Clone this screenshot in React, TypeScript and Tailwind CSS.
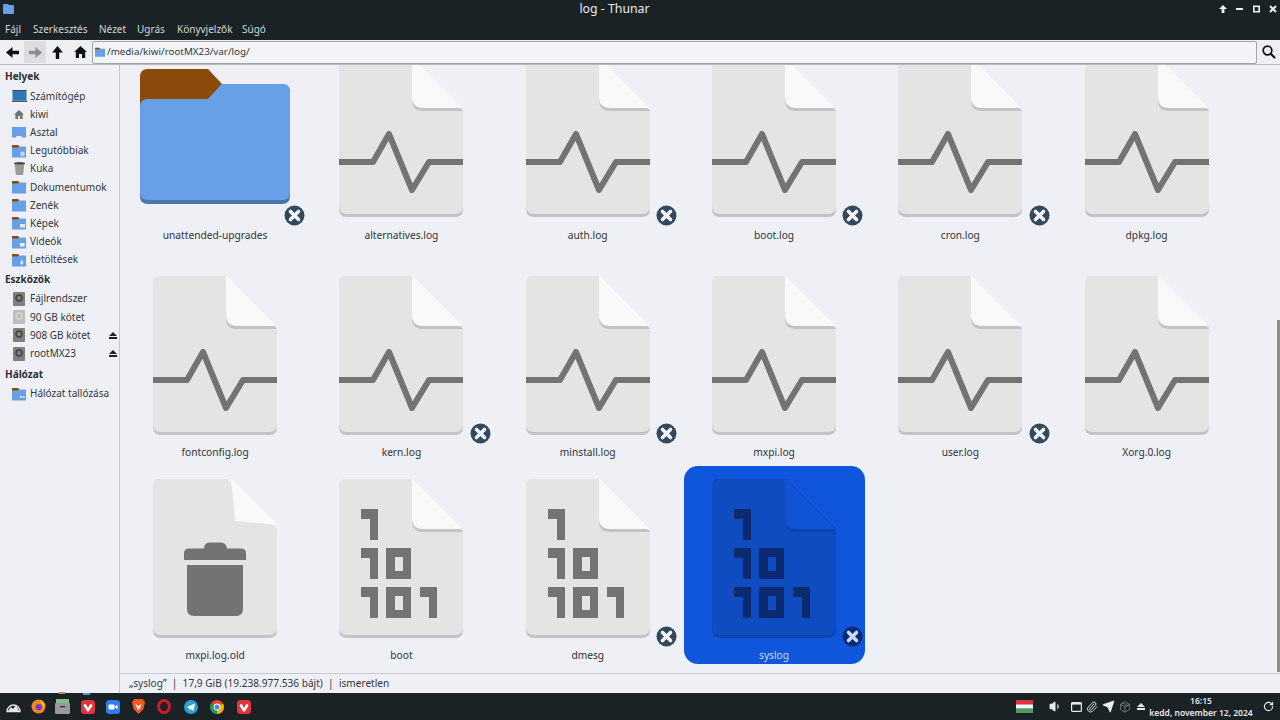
import React from "react";
import { Volume1, Paperclip, Send, Package, RotateCw } from "lucide-react";

const FONT = "font-['Noto_Sans',sans-serif]";

type Kind = "folder" | "log" | "bin" | "old";

function PaperBody({ selected }: { selected?: boolean }) {
  const body = selected ? "#0f4cc0" : "#e4e4e4";
  const edge = selected ? "#0d45ae" : "#c3c3c7";
  return (
    <>
      <path d="M8 3H73L124 54V151q0 8-8 8H8q-8 0-8-8V11q0-8 8-8Z" fill={edge} />
      <path d="M8 -1H73L124 50V148q0 8-8 8H8q-8 0-8-8V7q0-8 8-8Z" fill={body} />
    </>
  );
}

function FileIcon({ kind, selected }: { kind: Kind; selected?: boolean }) {
  const ink = selected ? "#0b2a6f" : "#737373";
  if (kind === "folder") {
    return (
      <svg width="150" height="135" viewBox="0 0 150 135" className="mb-[3px]">
        <path d="M8 0H68L82 15 68 31H10L0 44V8q0-8 8-8Z" fill="#8b4a0a" />
        <path d="M8 30H68L82 15H142q8 0 8 8V127q0 8-8 8H8q-8 0-8-8V38q0-8 8-8Z" fill="#4a76ab" />
        <path d="M8 30H68L82 15H142q8 0 8 8V123q0 8-8 8H8q-8 0-8-8V38q0-8 8-8Z" fill="#68a0e7" />
      </svg>
    );
  }
  const foldFill = selected ? "#1053d4" : "#f9f9f9";
  return (
    <svg width="124" height="159" viewBox="0 0 124 159" className="overflow-hidden">
      <PaperBody selected={selected} />
      {kind === "old" ? (
        <>
          <path d="M78 -1L125 46 82 42Z" fill="#f9f9f9" />
          <path d="M51 69.5q0-6 6-6h11q5 0 6 6H88q5 0 5 5V81H31V74.5q0-5 5-5Z" fill={ink} />
          <path d="M34 86H90V130q0 7-7 7H41q-7 0-7-7Z" fill={ink} />
        </>
      ) : (
        <>
          <path d="M73 1V42q0 11 11 11H124Z" fill={selected ? "#0d45ae" : "#c3c3c7"} />
          <path d="M73 -1V39q0 11 11 11H124Z" fill={foldFill} />
          {selected && <path d="M73 -1L124 50" stroke="#0d48b8" strokeWidth="1" />}
        </>
      )}
      {kind === "log" && (
        <path
          d="M0 104H34L50 76 73 132 90 104H124"
          fill="none"
          stroke={ink}
          strokeWidth="6"
          strokeLinejoin="round"
        />
      )}
      {kind === "bin" && (
        <path
          fillRule="evenodd"
          d="M22 30H39V61H31V40H22ZM22 69H39V100H31V79H22ZM47 69H72V100H47ZM56 78V92H64V78ZM22 108H39V139H31V118H22ZM47 108H72V139H47ZM56 117V131H64V117ZM81 108H98V139H90V118H81Z"
          fill={ink}
        />
      )}
    </svg>
  );
}

function Badge({ selected }: { selected?: boolean }) {
  return (
    <svg
      width="21"
      height="21"
      viewBox="0 0 21 21"
      className="absolute left-[161.5px] top-[159.5px]"
    >
      <circle cx="10.5" cy="10.5" r="10" fill={selected ? "#0b2a6f" : "#33495c"} />
      <path
        d="M6.5 6.5L14.5 14.5M14.5 6.5L6.5 14.5"
        stroke={selected ? "#c8d8f5" : "#f3f4f6"}
        strokeWidth="3.6"
        strokeLinecap="round"
      />
    </svg>
  );
}

type Item = { name: string; kind: Kind; badge?: boolean; selected?: boolean };

function Cell({ item, labelGap }: { item: Item; labelGap: string }) {
  return (
    <div className="relative flex h-[198px] flex-col items-center">
      <div
        className={`flex w-[181px] h-[198px] flex-col items-center rounded-[14px] pt-[13px] ${
          item.selected ? "bg-[#0f56dc]" : ""
        }`}
      >
        <div className="flex h-[159px] items-center justify-center">
          <FileIcon kind={item.kind} selected={item.selected} />
        </div>
        <div
          className={`${labelGap} text-[10.2px] leading-[16px] ${
            item.selected ? "text-[#c9d8f5]" : "text-[#2f3337]"
          }`}
        >
          {item.name}
        </div>
      </div>
      {item.badge && <Badge selected={item.selected} />}
    </div>
  );
}

const row1: Item[] = [
  { name: "unattended-upgrades", kind: "folder", badge: true },
  { name: "alternatives.log", kind: "log" },
  { name: "auth.log", kind: "log", badge: true },
  { name: "boot.log", kind: "log", badge: true },
  { name: "cron.log", kind: "log", badge: true },
  { name: "dpkg.log", kind: "log" },
];
const row2: Item[] = [
  { name: "fontconfig.log", kind: "log" },
  { name: "kern.log", kind: "log", badge: true },
  { name: "minstall.log", kind: "log", badge: true },
  { name: "mxpi.log", kind: "log" },
  { name: "user.log", kind: "log", badge: true },
  { name: "Xorg.0.log", kind: "log" },
];
const row3: Item[] = [
  { name: "mxpi.log.old", kind: "old" },
  { name: "boot", kind: "bin" },
  { name: "dmesg", kind: "bin", badge: true },
  { name: "syslog", kind: "bin", badge: true, selected: true },
];

function Row({
  items,
  className,
  labelGap,
}: {
  items: Item[];
  className?: string;
  labelGap: string;
}) {
  return (
    <div className={`grid shrink-0 grid-cols-[repeat(6,186.3px)] ${className ?? ""}`}>
      {items.map((i) => (
        <Cell key={i.name} item={i} labelGap={labelGap} />
      ))}
    </div>
  );
}

function SmallFolder({
  glyph,
  size = 14,
}: {
  glyph?: "pic" | "vid" | "down" | "net" | "clock";
  size?: number;
}) {
  return (
    <svg width={size} height={size} viewBox="0 0 14 14">
      <path d="M0 1.5q0-.5.5-.5H6L7.5 2.5 6 4H0Z" fill="#8b4a0a" />
      <path d="M0 3.5H6L7.5 2.5H13.5q.5 0 .5.5V13q0 .5-.5.5H.5Q0 13.5 0 13Z" fill="#68a0e7" />
      {glyph === "pic" && <rect x="8" y="8" width="5" height="3.5" fill="#e8eef8" />}
      {glyph === "vid" && <rect x="8" y="8" width="4.5" height="3.5" fill="#f3f6fb" />}
      {glyph === "down" && <path d="M9 7h1.5v2.5H12L9.8 12 7.6 9.5H9Z" fill="#e8eef8" />}
      {glyph === "net" && <path d="M8 9h2v2H8ZM11 9h1.5v2H11Z" fill="#e8eef8" />}
      {glyph === "clock" && <circle cx="10.5" cy="10" r="2.4" fill="#c6d6ea" />}
    </svg>
  );
}

function Drive({ light }: { light?: boolean }) {
  return (
    <svg width="12" height="14" viewBox="0 0 12 14">
      <rect width="12" height="14" rx="1" fill={light ? "#bdbdbd" : "#7f7f7f"} />
      <circle cx="6" cy="6" r="3" fill="none" stroke={light ? "#d4d4d4" : "#3f3f3f"} strokeWidth="1.4" />
    </svg>
  );
}

const Computer = () => (
  <svg width="15" height="13" viewBox="0 0 15 13">
    <rect x="0.5" y="0" width="14" height="10.5" rx="0.5" fill="#2f78b7" />
    <rect x="0.5" y="0" width="14" height="1" fill="#33506b" />
    <rect x="0" y="10.5" width="15" height="1.5" fill="#465a6b" />
  </svg>
);
const Home = () => (
  <svg width="10" height="9" viewBox="0 0 10 9">
    <path d="M5 0L10 4.5H8.6V9H5.9V6H4.1V9H1.4V4.5H0Z" fill="#6f7478" />
  </svg>
);
const Desk = () => (
  <svg width="14" height="11" viewBox="0 0 14 11">
    <path d="M0 0H14V10.5H10L9.5 9H4.5L4 10.5H0Z" fill="#68a0e7" />
  </svg>
);
const TrashSmall = () => (
  <svg width="11" height="13" viewBox="0 0 11 13">
    <ellipse cx="5.5" cy="1.5" rx="5.5" ry="1.5" fill="#44484b" />
    <path d="M.8 2.5H10.2L9.3 12q0 1-1.2 1H2.9q-1.2 0-1.2-1Z" fill="#9b9b9b" />
  </svg>
);

function SideHeader({ label, className }: { label: string; className?: string }) {
  return (
    <div className={`px-[5px] text-[10px] font-bold leading-[16px] text-[#2b2e31] ${className ?? ""}`}>
      {label}
    </div>
  );
}

function SideItem({
  icon,
  label,
  eject,
}: {
  icon: React.ReactNode;
  label: string;
  eject?: boolean;
}) {
  return (
    <div className="flex h-[18.2px] items-center text-[10px] text-[#33373a]">
      <div className="flex w-[30px] shrink-0 items-center justify-center pl-[8px]">{icon}</div>
      <div className="flex-1">{label}</div>
      {eject && (
        <svg width="8" height="7" viewBox="0 0 8 7" className="mr-[2px]">
          <path d="M4 0L8 4H0ZM0 5H8V7H0Z" fill="#222" />
        </svg>
      )}
    </div>
  );
}

function Sidebar() {
  return (
    <aside className="flex w-[120px] shrink-0 flex-col border-r border-[#c7c8cd] bg-[#eff0f5] pt-[3px]">
      <SideHeader label="Helyek" />
      <div className="mt-[3px] flex flex-col">
        <SideItem icon={<Computer />} label="Számítógép" />
        <SideItem icon={<Home />} label="kiwi" />
        <SideItem icon={<Desk />} label="Asztal" />
        <SideItem icon={<SmallFolder glyph="clock" />} label="Legutóbbiak" />
        <SideItem icon={<TrashSmall />} label="Kuka" />
        <SideItem icon={<SmallFolder />} label="Dokumentumok" />
        <SideItem icon={<SmallFolder />} label="Zenék" />
        <SideItem icon={<SmallFolder glyph="pic" />} label="Képek" />
        <SideItem icon={<SmallFolder glyph="vid" />} label="Videók" />
        <SideItem icon={<SmallFolder glyph="down" />} label="Letöltések" />
      </div>
      <SideHeader label="Eszközök" className="mt-[2px]" />
      <div className="mt-[3px] flex flex-col">
        <SideItem icon={<Drive />} label="Fájlrendszer" />
        <SideItem icon={<Drive light />} label="90 GB kötet" />
        <SideItem icon={<Drive />} label="908 GB kötet" eject />
        <SideItem icon={<Drive />} label="rootMX23" eject />
      </div>
      <SideHeader label="Hálózat" className="mt-[3px]" />
      <div className="mt-[3px]">
        <SideItem icon={<SmallFolder glyph="net" />} label="Hálózat tallózása" />
      </div>
    </aside>
  );
}

function Arrow({ dir, color }: { dir: "l" | "r" | "u"; color: string }) {
  const rot = dir === "l" ? "" : dir === "r" ? "rotate-180" : "rotate-90";
  return (
    <svg width="13" height="13" viewBox="0 0 13 13" className={rot}>
      <path d="M6.5 1V4.8H13V8.2H6.5V12L0 6.5Z" fill={color} />
    </svg>
  );
}

function Toolbar() {
  return (
    <div className="flex h-[25px] shrink-0 items-center bg-[#eeeff3] pl-[1px] border-b border-[#b9babd]">
      <div className="flex h-[22px] w-[23px] items-center justify-center">
        <Arrow dir="l" color="#0e0e0e" />
      </div>
      <div className="flex h-[22px] w-[22px] items-center justify-center bg-[#dcdde1]">
        <Arrow dir="r" color="#8d8e90" />
      </div>
      <div className="flex h-[22px] w-[23px] items-center justify-center">
        <Arrow dir="u" color="#0e0e0e" />
      </div>
      <div className="flex h-[22px] w-[23px] items-center justify-center">
        <svg width="13" height="12" viewBox="0 0 13 12">
          <path d="M6.5 0L13 6H11.2V12H8V8H5V12H1.8V6H0Z" fill="#111" />
        </svg>
      </div>
      <div className="flex h-[23px] w-[1165px] items-center rounded-[2px] border border-[#a4a5a8] bg-[#f3f4f8] pl-[2px] text-[9.8px] text-[#33373a]">
        <SmallFolder size={10} />
        <span className="ml-[2px]">/media/kiwi/rootMX23/var/log/</span>
      </div>
      <div className="flex flex-1 items-center justify-center">
        <svg width="14" height="14" viewBox="0 0 14 14">
          <circle cx="5.5" cy="5.5" r="4.3" fill="none" stroke="#111" strokeWidth="1.7" />
          <path d="M8.7 8.7L13 13" stroke="#111" strokeWidth="2.2" />
        </svg>
      </div>
    </div>
  );
}

function TitleBar() {
  return (
    <div className="flex h-[18px] shrink-0 items-center justify-between pl-[3px] pr-[3px] text-white">
      <svg width="11" height="10" viewBox="0 0 11 10">
        <path d="M0 1q0-1 1-1H5L6 1H10q1 0 1 1V9q0 1-1 1H1Q0 10 0 9Z" fill="#68a0e7" />
      </svg>
      <span className="mr-[4px] text-[12.3px] text-[#e8eaec]">log - Thunar</span>
      <div className="flex items-center gap-[9px]">
        <svg width="8" height="8" viewBox="0 0 8 8"><path d="M4 0L8 4H5.4V8H2.6V4H0Z" fill="#eee" /></svg>
        <svg width="8" height="8" viewBox="0 0 8 8"><rect y="3" width="7" height="2" fill="#eee" /></svg>
        <svg width="7" height="8" viewBox="0 0 7 7"><rect x="0.8" y="0.8" width="5.4" height="5.4" fill="none" stroke="#eee" strokeWidth="1.6" /></svg>
        <svg width="8" height="8" viewBox="0 0 8 8"><path d="M1 1L7 7M7 1L1 7" stroke="#eee" strokeWidth="2" /></svg>
      </div>
    </div>
  );
}

function MenuBar() {
  const items = [
    ["Fájl", "w-[28px]"],
    ["Szerkesztés", "w-[66px]"],
    ["Nézet", "w-[38px]"],
    ["Ugrás", "w-[40px]"],
    ["Könyvjelzők", "w-[65px]"],
    ["Súgó", "w-[30px]"],
  ];
  return (
    <div className="flex h-[22px] shrink-0 items-center pl-[5px] text-[10px] text-[#d3d6d8]">
      {items.map(([t, w]) => (
        <span key={t} className={w}>
          {t}
        </span>
      ))}
    </div>
  );
}

const Vivaldi = () => (
  <svg width="14" height="14" viewBox="0 0 14 14">
    <rect width="14" height="14" rx="3.5" fill="#e2343a" />
    <path d="M3 4.5q1.5-1 2.3.5L7 8l1.7-3q.8-1.5 2.3-.5.7.8 0 2L8 11q-1 1.3-2 0L3 6.5q-.7-1.2 0-2Z" fill="#fff" />
  </svg>
);

function TaskIcons() {
  return (
    <div className="flex items-center">
      <div className="flex w-[26px] justify-center">
        <svg width="15" height="12" viewBox="0 0 15 12">
          <path d="M1 10.5A6.5 6.5 0 1 1 14 10.5H1Z" fill="none" stroke="#e5e5e5" strokeWidth="1.4" />
          <path d="M2 10L5 6l2 2 3-4 3 6Z" fill="#e5e5e5" />
        </svg>
      </div>
      <div className="flex w-[24px] justify-center">
        <svg width="15" height="15" viewBox="0 0 15 15">
          <circle cx="7.5" cy="7.5" r="7" fill="#f4851f" />
          <path d="M9 .8Q14.5 3.5 14 9L10 4Z" fill="#ffbd2e" />
          <circle cx="7.8" cy="8" r="3.1" fill="#6b3fc9" />
        </svg>
      </div>
      <div className="relative flex w-[25px] justify-center">
        <svg width="15" height="15" viewBox="0 0 15 15">
          <rect x="1" y="0" width="13" height="5" fill="#7fc08a" />
          <rect y="4" width="15" height="11" rx="1" fill="#9a9a9a" />
          <rect x="5" y="7" width="5" height="1.3" fill="#333" />
        </svg>
        <div className="absolute left-[9px] top-[-7px] h-[2px] w-[6px] bg-[#d08a4a]" />
      </div>
      <div className="relative flex w-[25px] justify-center">
        <Vivaldi />
        <div className="absolute left-[8px] top-[-7px] h-[2px] w-[7px] bg-[#4f9bd0]" />
      </div>
      <div className="flex w-[25px] justify-center">
        <svg width="14" height="14" viewBox="0 0 14 14">
          <rect width="14" height="14" rx="3.5" fill="#2d7ff0" />
          <rect x="2.5" y="4.5" width="6" height="5" rx="1" fill="#fff" />
          <path d="M9.2 6.3L11.5 4.8V9.2L9.2 7.7Z" fill="#fff" />
        </svg>
      </div>
      <div className="flex w-[26px] justify-center">
        <svg width="13" height="15" viewBox="0 0 13 15">
          <path d="M2.5 0H10.5L13 3 11.5 10 6.5 15 1.5 10 0 3Z" fill="#f15a22" />
          <path d="M3.5 5L6.5 7 9.5 5 8 9 6.5 11 5 9Z" fill="#fff" />
        </svg>
      </div>
      <div className="flex w-[26px] justify-center">
        <svg width="14" height="15" viewBox="0 0 14 15">
          <ellipse cx="7" cy="7.5" rx="5.4" ry="6" fill="none" stroke="#d3182d" strokeWidth="3" />
        </svg>
      </div>
      <div className="flex w-[27px] justify-center">
        <svg width="14" height="14" viewBox="0 0 14 14">
          <circle cx="7" cy="7" r="7" fill="#2a9fd9" />
          <path d="M2.5 7L11 3.5 9.5 11 6.5 9 5.5 10.5 5 8Z" fill="#fff" />
        </svg>
      </div>
      <div className="flex w-[26px] justify-center">
        <svg width="14" height="14" viewBox="0 0 14 14">
          <circle cx="7" cy="7" r="7" fill="#db4437" />
          <path d="M7 7L1 3.5A7 7 0 0 0 7 14Z" fill="#0f9d58" />
          <path d="M7 7L13 3.5A7 7 0 0 1 7 14Z" fill="#f4b400" />
          <circle cx="7" cy="7" r="3.4" fill="#fff" />
          <circle cx="7" cy="7" r="2.5" fill="#4285f4" />
        </svg>
      </div>
      <div className="flex w-[27px] justify-center">
        <Vivaldi />
      </div>
    </div>
  );
}

function Taskbar() {
  return (
    <div className="flex h-[27px] shrink-0 items-center bg-[#1b2226] text-[#e8e8e8]">
      <TaskIcons />
      <div className="flex-1" />
      <svg width="17" height="13" viewBox="0 0 17 13" className="mr-[16px]">
        <rect width="17" height="4.4" fill="#d8343a" />
        <rect y="4.4" width="17" height="4.3" fill="#f4f4f4" />
        <rect y="8.7" width="17" height="4.3" fill="#4f9a5c" />
      </svg>
      <div className="flex items-center gap-[4px] text-[#e8e8e8]">
        <Volume1 size={13} fill="#e8e8e8" strokeWidth={2} className="mr-[3px]" />
        <svg width="11" height="10" viewBox="0 0 11 10" className="ml-[2px]">
          <rect x="0.6" y="0.6" width="9.8" height="8.8" rx="1" fill="none" stroke="#e8e8e8" strokeWidth="1.2" />
          <rect x="0.6" y="0.6" width="9.8" height="2" fill="#e8e8e8" />
        </svg>
        <Paperclip size={12} strokeWidth={1.8} />
        <Send size={13} fill="#f0f0f0" strokeWidth={1.5} />
        <Package size={12} strokeWidth={1.3} className="text-[#9b9b9b]" />
        <svg width="8" height="7" viewBox="0 0 8 7" className="ml-[2px]">
          <path d="M4 0L8 4H0ZM0 5H8V7H0Z" fill="#e8e8e8" />
        </svg>
      </div>
      <div className="flex w-[113px] flex-col items-center text-[8.5px] font-semibold leading-[12px]">
        <span>16:15</span>
        <span className="whitespace-nowrap">kedd, november 12, 2024</span>
      </div>
      <div className="flex w-[22.5px] justify-center">
        <RotateCw size={11} strokeWidth={2.4} />
      </div>
    </div>
  );
}

export default function App() {
  return (
    <div className={`flex h-[720px] w-[1280px] flex-col overflow-hidden bg-[#1b2226] ${FONT}`}>
      <TitleBar />
      <MenuBar />
      <Toolbar />
      <div className="flex min-h-0 flex-1 bg-[#eef0f6]">
        <Sidebar />
        <div className="flex min-w-0 flex-1 flex-col">
          <main className="relative flex min-h-0 flex-1 flex-col overflow-hidden pl-[2px]">
            <Row items={row1} className="mt-[-20px]" labelGap="mt-[10px]" />
            <Row items={row2} className="mt-[20px]" labelGap="mt-[9px]" />
            <Row items={row3} className="mt-[5px]" labelGap="mt-[9px]" />
            <div className="absolute right-0 top-[255px] h-[352px] w-[3px] bg-[#8c8c8c]" />
          </main>
          <div className="flex h-[20px] shrink-0 items-center border-t border-[#c7c8cd] pl-[9px] text-[10.1px] text-[#33373a] whitespace-pre">
            „syslog”  |  17,9 GiB (19.238.977.536 bájt)  |  ismeretlen
          </div>
        </div>
      </div>
      <Taskbar />
    </div>
  );
}
